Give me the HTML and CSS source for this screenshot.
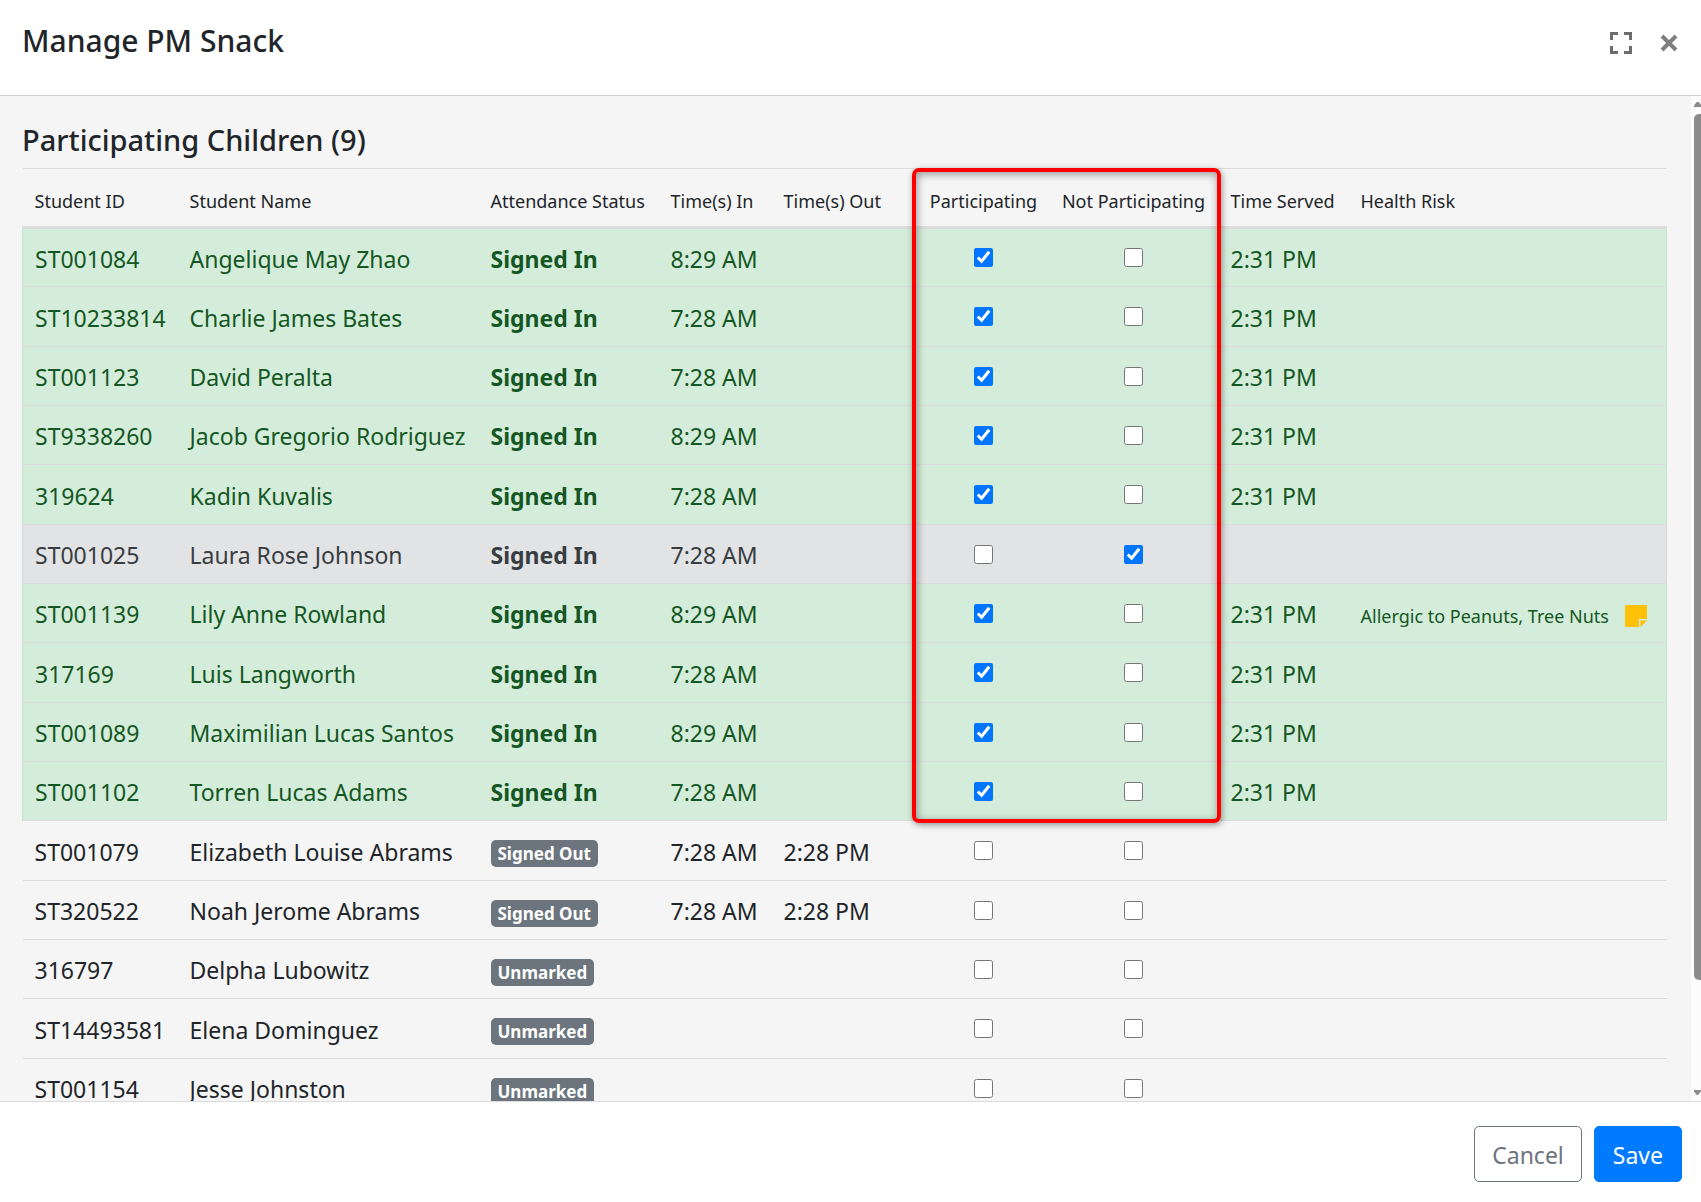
FILE: index.html
```
<!DOCTYPE html>
<html lang="en">
  <head>
    <meta charset="UTF-8" />
    <meta name="viewport" content="width=device-width, initial-scale=1.0" />
    <title>Manage PM Snack</title>
    <link rel="stylesheet" href="styles.css">
  </head>
  <body>
    <!-- start header -->
    <header class="modal-header">
      <h1 class="modal-title">Manage PM Snack</h1>
      <div class="header-buttons">
        <button class="icon-btn" aria-label="Full screen">
          <svg width="22" height="22" viewBox="0 0 22 22" fill="none" stroke="#6c6c6c" stroke-width="3">
            <path d="M1.5 8V1.5H8M14 1.5h6.500V8M20.500 14v6.500H14M8 20.500H1.500V14" />
          </svg>
        </button>
        <button class="icon-btn" aria-label="Close">
          <svg width="18" height="18" viewBox="0 0 18 18" fill="none" stroke="#7f7f7f" stroke-width="4">
            <path d="M2 2l14 14M16 2L2 16" />
          </svg>
        </button>
      </div>
    </header>
    <!-- end header -->

    <!-- start body -->
    <main class="modal-body">
      <div class="content">
        <h2 class="section-title">Participating Children (9)</h2>
        <div class="table-wrap">
          <table class="children">
            <colgroup>
              <col class="col-id" />
              <col class="col-name" />
              <col class="col-status" />
              <col class="col-in" />
              <col class="col-out" />
              <col class="col-part" />
              <col class="col-not" />
              <col class="col-served" />
              <col />
            </colgroup>
            <thead>
              <tr>
                <th>Student ID</th>
                <th>Student Name</th>
                <th>Attendance Status</th>
                <th>Time(s) In</th>
                <th>Time(s) Out</th>
                <th class="center">Participating</th>
                <th class="center">Not Participating</th>
                <th>Time Served</th>
                <th>Health Risk</th>
              </tr>
            </thead>
            <tbody>
              <tr class="is-in">
                <td>ST001084</td><td>Angelique May Zhao</td><td><b>Signed In</b></td><td>8:29 AM</td><td></td>
                <td class="center"><input type="checkbox" aria-label="Participating" checked /></td>
                <td class="center"><input type="checkbox" aria-label="Not Participating" /></td>
                <td>2:31 PM</td><td></td>
              </tr>
              <tr class="is-in">
                <td>ST10233814</td><td>Charlie James Bates</td><td><b>Signed In</b></td><td>7:28 AM</td><td></td>
                <td class="center"><input type="checkbox" aria-label="Participating" checked /></td>
                <td class="center"><input type="checkbox" aria-label="Not Participating" /></td>
                <td>2:31 PM</td><td></td>
              </tr>
              <tr class="is-in">
                <td>ST001123</td><td>David Peralta</td><td><b>Signed In</b></td><td>7:28 AM</td><td></td>
                <td class="center"><input type="checkbox" aria-label="Participating" checked /></td>
                <td class="center"><input type="checkbox" aria-label="Not Participating" /></td>
                <td>2:31 PM</td><td></td>
              </tr>
              <tr class="is-in">
                <td>ST9338260</td><td>Jacob Gregorio Rodriguez</td><td><b>Signed In</b></td><td>8:29 AM</td><td></td>
                <td class="center"><input type="checkbox" aria-label="Participating" checked /></td>
                <td class="center"><input type="checkbox" aria-label="Not Participating" /></td>
                <td>2:31 PM</td><td></td>
              </tr>
              <tr class="is-in">
                <td>319624</td><td>Kadin Kuvalis</td><td><b>Signed In</b></td><td>7:28 AM</td><td></td>
                <td class="center"><input type="checkbox" aria-label="Participating" checked /></td>
                <td class="center"><input type="checkbox" aria-label="Not Participating" /></td>
                <td>2:31 PM</td><td></td>
              </tr>
              <tr class="is-not">
                <td>ST001025</td><td>Laura Rose Johnson</td><td><b>Signed In</b></td><td>7:28 AM</td><td></td>
                <td class="center"><input type="checkbox" aria-label="Participating" /></td>
                <td class="center"><input type="checkbox" aria-label="Not Participating" checked /></td>
                <td></td><td></td>
              </tr>
              <tr class="is-in">
                <td>ST001139</td><td>Lily Anne Rowland</td><td><b>Signed In</b></td><td>8:29 AM</td><td></td>
                <td class="center"><input type="checkbox" aria-label="Participating" checked /></td>
                <td class="center"><input type="checkbox" aria-label="Not Participating" /></td>
                <td>2:31 PM</td>
                <td>
                  <div class="risk">
                    <span>Allergic to Peanuts, Tree Nuts</span>
                    <svg width="22" height="22" viewBox="0 0 22 22" fill="#ffc107">
                      <path d="M1 0h20q1 0 1 1v13h-8v8H1q-1 0-1-1V1q0-1 1-1z" />
                      <path d="M15.500 15.500H22L15.500 22z" />
                    </svg>
                  </div>
                </td>
              </tr>
              <tr class="is-in">
                <td>317169</td><td>Luis Langworth</td><td><b>Signed In</b></td><td>7:28 AM</td><td></td>
                <td class="center"><input type="checkbox" aria-label="Participating" checked /></td>
                <td class="center"><input type="checkbox" aria-label="Not Participating" /></td>
                <td>2:31 PM</td><td></td>
              </tr>
              <tr class="is-in">
                <td>ST001089</td><td>Maximilian Lucas Santos</td><td><b>Signed In</b></td><td>8:29 AM</td><td></td>
                <td class="center"><input type="checkbox" aria-label="Participating" checked /></td>
                <td class="center"><input type="checkbox" aria-label="Not Participating" /></td>
                <td>2:31 PM</td><td></td>
              </tr>
              <tr class="is-in">
                <td>ST001102</td><td>Torren Lucas Adams</td><td><b>Signed In</b></td><td>7:28 AM</td><td></td>
                <td class="center"><input type="checkbox" aria-label="Participating" checked /></td>
                <td class="center"><input type="checkbox" aria-label="Not Participating" /></td>
                <td>2:31 PM</td><td></td>
              </tr>
              <tr>
                <td>ST001079</td><td>Elizabeth Louise Abrams</td><td><span class="badge">Signed Out</span></td><td>7:28 AM</td><td>2:28 PM</td>
                <td class="center"><input type="checkbox" aria-label="Participating" /></td>
                <td class="center"><input type="checkbox" aria-label="Not Participating" /></td>
                <td></td><td></td>
              </tr>
              <tr>
                <td>ST320522</td><td>Noah Jerome Abrams</td><td><span class="badge">Signed Out</span></td><td>7:28 AM</td><td>2:28 PM</td>
                <td class="center"><input type="checkbox" aria-label="Participating" /></td>
                <td class="center"><input type="checkbox" aria-label="Not Participating" /></td>
                <td></td><td></td>
              </tr>
              <tr>
                <td>316797</td><td>Delpha Lubowitz</td><td><span class="badge">Unmarked</span></td><td></td><td></td>
                <td class="center"><input type="checkbox" aria-label="Participating" /></td>
                <td class="center"><input type="checkbox" aria-label="Not Participating" /></td>
                <td></td><td></td>
              </tr>
              <tr>
                <td>ST14493581</td><td>Elena Dominguez</td><td><span class="badge">Unmarked</span></td><td></td><td></td>
                <td class="center"><input type="checkbox" aria-label="Participating" /></td>
                <td class="center"><input type="checkbox" aria-label="Not Participating" /></td>
                <td></td><td></td>
              </tr>
              <tr>
                <td>ST001154</td><td>Jesse Johnston</td><td><span class="badge">Unmarked</span></td><td></td><td></td>
                <td class="center"><input type="checkbox" aria-label="Participating" /></td>
                <td class="center"><input type="checkbox" aria-label="Not Participating" /></td>
                <td></td><td></td>
              </tr>
            </tbody>
          </table>
          <!-- red frame over the two checkbox columns -->
          <div class="highlight"></div>
        </div>
      </div>
      <div class="scrollbar">
        <svg width="10" height="7" viewBox="0 0 10 7" fill="#8b8b8b"><path d="M0 7V5L4 0h3l5 7z" /></svg>
        <div class="thumb"></div>
        <svg class="arrow-down" width="10" height="7" viewBox="0 0 10 7" fill="#8b8b8b"><path d="M0 0v2l4 5h2l5-7z" /></svg>
      </div>
    </main>
    <!-- end body -->

    <!-- start footer -->
    <footer class="modal-footer">
      <button class="btn cancel-btn">Cancel</button>
      <button class="btn save-btn">Save</button>
    </footer>
    <!-- end footer -->
  </body>
</html>
```
FILE: styles.css
```
* {
  box-sizing: border-box;
}
body {
  margin: 0;
  height: 100vh;
  display: flex;
  flex-direction: column;
  overflow: hidden;
  font-family: "Noto Sans", "Open Sans", sans-serif;
  font-size: 23px;
  color: #212529;
  background-color: white;
}
.modal-header {
  display: flex;
  justify-content: space-between;
  align-items: flex-start;
  padding: 19px 23px 28px 22px;
  border-bottom: 1px solid #d0d0d0;
}
.modal-title {
  margin: 0;
  font-size: 30px;
  line-height: 43px;
  font-weight: 500;
}
.header-buttons {
  display: flex;
  align-items: center;
  gap: 28px;
  height: 48px;
}
.icon-btn {
  display: flex;
  padding: 0;
  border: none;
  background: none;
  cursor: pointer;
}
.modal-body {
  flex: 1;
  min-height: 0;
  display: flex;
  background-color: #f5f5f5;
}
.content {
  flex: 1;
  overflow: hidden;
  padding: 24px 24px 0 22px;
}
.section-title {
  margin: 0;
  padding-bottom: 8px;
  font-size: 29px;
  line-height: 40px;
  font-weight: 500;
}
.table-wrap {
  position: relative;
}
.children {
  width: 100%;
  table-layout: fixed;
  border-collapse: collapse;
}
.col-id {
  width: 155px;
}
.col-name {
  width: 301px;
}
.col-status {
  width: 180px;
}
.col-in {
  width: 113px;
}
.col-out {
  width: 147px;
}
.col-part {
  width: 130px;
}
.col-not {
  width: 170px;
}
.col-served {
  width: 130px;
}
th {
  height: 59px;
  padding: 6px 0 0 12px;
  border-top: 1px solid #dcdcdc;
  border-bottom: 3px solid #dcdcdc;
  font-size: 18px;
  font-weight: 400;
  text-align: left;
  white-space: nowrap;
}
td {
  height: 59px;
  padding: 2px 0 0 12px;
  border-bottom: 1px solid #dcdcdc;
  line-height: 30px;
  white-space: nowrap;
}
tr:nth-child(3n + 2) td {
  height: 60px;
}
th.center,
td.center {
  padding-left: 0;
  text-align: center;
}
td.center {
  padding-top: 0;
}
.is-in {
  background-color: #d4edda;
  color: #155724;
  border-left: 1px solid #c3e6cb;
  border-right: 1px solid #c3e6cb;
}
.is-not {
  background-color: #e2e3e5;
  color: #383d41;
  border-left: 1px solid #d6d8db;
  border-right: 1px solid #d6d8db;
}
td input {
  display: block;
  width: 19px;
  height: 19px;
  margin: 0 auto;
  accent-color: #0075ff;
}
.badge {
  display: inline-block;
  padding: 0 7px;
  border-radius: 5px;
  background-color: #6c757d;
  color: white;
  font-size: 17px;
  line-height: 27px;
  font-weight: bold;
  vertical-align: middle;
}
.risk {
  display: flex;
  align-items: center;
  gap: 16px;
  padding-top: 4px;
  font-size: 18px;
}
.highlight {
  position: absolute;
  top: 0;
  left: 890px;
  width: 309px;
  height: 655px;
  border: 4px solid red;
  border-radius: 7px;
  box-shadow: 1px 2px 6px rgba(0, 0, 0, 0.4), inset 1px 2px 8px rgba(0, 0, 0, 0.4);
  pointer-events: none;
}
.scrollbar {
  width: 10px;
  display: flex;
  flex-direction: column;
  align-items: flex-end;
  padding: 5px 0;
  background-color: #fcfcfc;
}
.scrollbar svg {
  width: 7px;
}
.thumb {
  width: 7px;
  height: 87%;
  margin-top: 6px;
  border-radius: 5px 0 0 5px;
  background-color: #8b8b8b;
}
.arrow-down {
  margin-top: auto;
}
.modal-footer {
  display: flex;
  justify-content: flex-end;
  gap: 12px;
  padding: 24px 19px 20px;
  border-top: 1px solid #dcdcdc;
}
.btn {
  height: 56px;
  padding: 2px 17px 0;
  border: 1px solid #6c757d;
  border-radius: 5px;
  font-family: inherit;
  font-size: 23px;
  cursor: pointer;
}
.cancel-btn {
  background-color: white;
  color: #6c757d;
}
.save-btn {
  padding: 2px 18px 0;
  border-color: #007bff;
  background-color: #007bff;
  color: white;
}
```
